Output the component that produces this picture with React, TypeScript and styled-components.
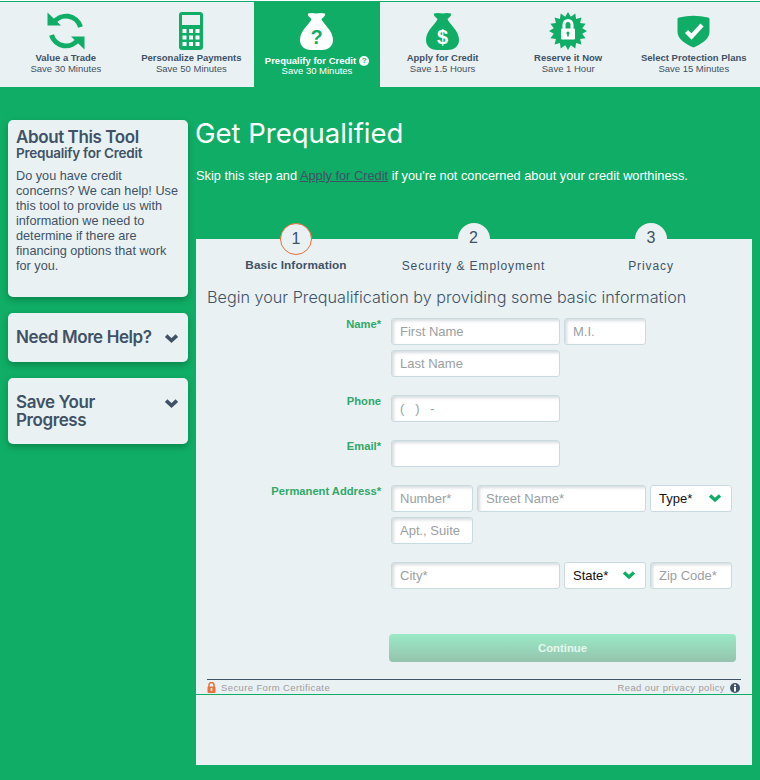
import React from 'react';
import styled, { createGlobalStyle } from 'styled-components';

const GREEN = '#10ad66';
const PALE = '#e9f1f3';
const SLATE = '#3f5266';
const HEAD = '"Inter", "Liberation Sans", sans-serif';

const GlobalStyle = createGlobalStyle`
    html, body {
        margin: 0;
        padding: 0;
        background: ${GREEN};
        font-family: "Liberation Sans", Arial, sans-serif;
    }
    * { box-sizing: border-box; }
`;

const Page = styled.div`
    width: 760px;
    height: 780px;
    overflow: hidden;
    background: ${GREEN};
`;
const TopBar = styled.nav`
    display: flex;
    height: 87px;
    padding: 1px 0 0 3px;
    background: ${PALE};
    border-top: 1px solid #fff;
    box-shadow: inset 0 1px 0 ${GREEN};
`;
const Tab = styled.div<{ $active?: boolean }>`
    flex: 0 0 125.6px;
    display: flex;
    flex-direction: column;
    align-items: center;
    padding-top: 10px;
    font-size: 9.5px;
    line-height: ${p => (p.$active ? '10px' : '11px')};
    text-align: center;
    white-space: nowrap;
    color: ${p => (p.$active ? '#fff' : SLATE)};
    background: ${p => (p.$active ? GREEN : 'transparent')};
`;
const IconBox = styled.div<{ $active?: boolean }>`
    height: 38px;
    display: flex;
    align-items: center;
    margin-bottom: ${p => (p.$active ? '6px' : '2px')};
`;
const TabTitle = styled.div`
    display: flex;
    align-items: center;
    gap: 3px;
    font-weight: 700;
`;
const TabHelp = styled.span`
    width: 10px;
    height: 10px;
    border-radius: 50%;
    background: #fff;
    color: ${GREEN};
    font-size: 8px;
    line-height: 10px;
    font-weight: 700;
`;
const Main = styled.div`
    display: flex;
    gap: 8px;
    padding: 33px 8px 0;
`;
const Side = styled.aside`
    flex: 0 0 180px;
    display: flex;
    flex-direction: column;
    gap: 16px;
`;
const Card = styled.div`
    position: relative;
    padding: 8px 8px 0;
    border-radius: 5px;
    background: ${PALE};
    color: ${SLATE};
    box-shadow: 0 3px 6px rgba(0, 60, 30, 0.35);
`;
const AboutCard = styled(Card)`
    height: 177px;
`;
const HelpCard = styled(Card)`
    height: 49px;
    padding-top: 15px;
`;
const SaveCard = styled(Card)`
    height: 66px;
    padding-top: 15px;
`;
const CardTitle = styled.div`
    font-family: ${HEAD};
    font-size: 17px;
    line-height: 18px;
    font-weight: 600;
    letter-spacing: -0.4px;
    width: 142px;
`;
const CardSub = styled.div`
    font-family: ${HEAD};
    font-size: 13.5px;
    line-height: 15px;
    font-weight: 600;
    letter-spacing: -0.25px;
`;
const CardText = styled.p`
    margin: 8px 0 0;
    width: 164px;
    font-size: 12.7px;
    line-height: 15px;
`;
const CardChevron = styled.div`
    position: absolute;
    right: 9px;
    top: 17px;
`;
const Content = styled.main`
    flex: 0 0 556px;
`;
const PageTitle = styled.h1`
    margin: 0 0 0 -1px;
    height: 31px;
    font-family: ${HEAD};
    font-size: 27.5px;
    line-height: 26px;
    font-weight: 400;
    color: #fff;
`;
const Skip = styled.p`
    margin: 17px 0 0;
    height: 71px;
    font-size: 12.8px;
    line-height: 15px;
    color: #fff;
    white-space: nowrap;
`;
const SkipLink = styled.a`
    color: ${SLATE};
    text-decoration: underline;
`;
const Panel = styled.section`
    height: 526px;
    padding: 0 11px;
    background: ${PALE};
`;
const Steps = styled.div`
    display: flex;
    height: 48px;
`;
const Step = styled.div<{ $width: number }>`
    flex: 0 0 ${p => p.$width}px;
    display: flex;
    flex-direction: column;
    align-items: center;
    margin-top: -16px;
`;
const StepDot = styled.div<{ $active?: boolean }>`
    width: 32px;
    height: 32px;
    border-radius: 50%;
    background: ${PALE};
    border: ${p => (p.$active ? '1px solid #e8703a' : 'none')};
    color: ${SLATE};
    font-size: 16px;
    line-height: 30px;
    text-align: center;
`;
const StepLabel = styled.div<{ $active?: boolean }>`
    margin-top: ${p => (p.$active ? '3px' : '4px')};
    font-size: ${p => (p.$active ? '11.8px' : '12px')};
    line-height: 14px;
    font-weight: ${p => (p.$active ? 700 : 400)};
    letter-spacing: ${p => (p.$active ? '0.1px' : '0.9px')};
    color: ${SLATE};
    white-space: nowrap;
`;
const Lead = styled.h2`
    margin: 0 0 9px;
    height: 22px;
    font-family: ${HEAD};
    font-size: 16.2px;
    line-height: 20px;
    font-weight: 300;
    color: ${SLATE};
    white-space: nowrap;
`;
const FormRow = styled.div<{ $gap: number }>`
    display: grid;
    grid-template-columns: 174px 345px;
    column-gap: 10px;
    margin-bottom: ${p => p.$gap}px;
`;
const Label = styled.label`
    text-align: right;
    font-size: 11.2px;
    line-height: 12px;
    font-weight: 700;
    color: #2fa869;
`;
const Fields = styled.div`
    display: flex;
    flex-wrap: wrap;
    gap: 5px 4px;
`;
const Input = styled.input<{ $w: number }>`
    width: ${p => p.$w}px;
    height: 27px;
    padding: 0 8px;
    border: 1px solid #c9dbe0;
    border-radius: 3px;
    background: #fff;
    box-shadow: inset 2px 2px 3px rgba(120, 140, 150, 0.3);
    font-family: "Liberation Sans", Arial, sans-serif;
    font-size: 13px;
    color: #222;
    outline: none;
    &::placeholder { color: #9a9fa3; opacity: 1; }
`;
const Picker = styled.div`
    width: 82px;
    height: 27px;
    display: flex;
    align-items: center;
    justify-content: space-between;
    padding: 0 9px 0 8px;
    border: 1px solid #c9dbe0;
    border-radius: 3px;
    background: #fff;
    font-size: 13px;
    color: #111;
`;
const AddressGap = styled.div`
    flex: 0 0 100%;
    height: 8px;
`;
const Continue = styled.button`
    display: block;
    width: 347px;
    height: 28px;
    margin: 45px 0 0 182px;
    border: none;
    border-radius: 4px;
    background: linear-gradient(#9aeac6, #95c3ae);
    color: #e6f7ef;
    font-family: "Liberation Sans", Arial, sans-serif;
    font-size: 11.3px;
    font-weight: 700;
`;
const Secure = styled.div`
    display: flex;
    justify-content: space-between;
    align-items: center;
    height: 15px;
    margin-top: 17px;
    padding: 1px 1px 0 0;
    border-top: 1px solid ${SLATE};
    font-size: 9.5px;
    line-height: 14px;
    letter-spacing: 0.38px;
    color: #a09ca0;
`;
const SecureSide = styled.div`
    display: flex;
    align-items: center;
    gap: 5px;
`;
const GreenRule = styled.div`
    height: 1px;
    margin: 0 -11px;
    background: ${GREEN};
`;

const Chevron = ({ color, size = 15 }: { color: string; size?: number }) => (
    <svg width={size} height={size * 0.72} viewBox="0 0 14 10">
        <path d="M2 2.5 L7 7 L12 2.5" fill="none" stroke={color} strokeWidth="3.4" />
    </svg>
);

const RefreshIcon = ({ c }: { c: string }) => {
    const half = (
        <>
            <path d="M6.5 11 A15 15 0 0 1 33.5 15" fill="none" stroke={c} strokeWidth="5" />
            <path d="M0.5 0.5 L0.5 13.5 L14 13.5 Z" fill={c} />
        </>
    );
    return (
        <svg width="38" height="38" viewBox="0 0 38 38">
            {half}
            <g transform="rotate(180 19 19)">{half}</g>
        </svg>
    );
};

const CalculatorIcon = ({ c }: { c: string }) => {
    const rows = [17, 23.5, 30];
    return (
        <svg width="24" height="38" viewBox="0 0 24 38">
            <rect x="0" y="0" width="24" height="38" rx="3" fill={c} />
            <rect x="3" y="3" width="18" height="10" fill={PALE} />
            {rows.map(y =>
                [3.5, 10, 16.5].map(x => <rect key={`${y}-${x}`} x={x} y={y} width="4" height="4" fill="#fff" />),
            )}
        </svg>
    );
};

const BagIcon = ({ bag, mark, glyph }: { bag: string; mark: string; glyph: string }) => (
    <svg width="33" height="38" viewBox="0 0 33 38">
        <path d="M8 1.5 Q12 0.5 16.5 1.5 Q21 0.5 25 1.5 Q26 3.5 21.5 7 C23 12 33 18 33 28 C33 35 27 38 22 38 L11 38 C6 38 0 35 0 28 C0 18 10 12 11.5 7 Q7 3.5 8 1.5 Z" fill={bag} />
        <text x="16.5" y="32" textAnchor="middle" fontFamily="Liberation Sans" fontWeight="700" fontSize="20" fill={mark}>
            {glyph}
        </text>
    </svg>
);

const burst = Array.from({ length: 32 }, (_, i) => {
    const r = i % 2 === 0 ? 19 : 14.5;
    const a = (i / 32) * Math.PI * 2;
    return `${(19 + r * Math.sin(a)).toFixed(1)},${(19 - r * Math.cos(a)).toFixed(1)}`;
}).join(' ');

const LockBadgeIcon = ({ c }: { c: string }) => (
    <svg width="38" height="38" viewBox="0 0 38 38">
        <polygon points={burst} fill={c} />
        <path d="M15 17 V12.5 a4 4 0 0 1 8 0 V17" fill="none" stroke="#fff" strokeWidth="3" />
        <rect x="12" y="16.5" width="14" height="11" rx="1" fill="#fff" />
        <circle cx="19" cy="21" r="1.6" fill={c} />
        <rect x="18.2" y="21" width="1.6" height="3.5" fill={c} />
    </svg>
);

const ShieldIcon = ({ c }: { c: string }) => (
    <svg width="33" height="33" viewBox="0 0 33 33">
        <path d="M0.5 4 Q0.5 2.5 2 2.5 Q16.5 -1 31 2.5 Q32.5 2.5 32.5 4 L32.5 17 C32.5 24 24 29.5 16.5 32.5 C9 29.5 0.5 24 0.5 17 Z" fill={c} />
        <path d="M9.5 16.5 L14.5 21.5 L25 10" fill="none" stroke="#fff" strokeWidth="4.4" />
    </svg>
);

const tabs = [
    { title: 'Value a Trade', save: 'Save 30 Minutes', icon: <RefreshIcon c={GREEN} /> },
    { title: 'Personalize Payments', save: 'Save 50 Minutes', icon: <CalculatorIcon c={GREEN} /> },
    { title: 'Prequalify for Credit', save: 'Save 30 Minutes', active: true, icon: <BagIcon bag="#fff" mark={GREEN} glyph="?" /> },
    { title: 'Apply for Credit', save: 'Save 1.5 Hours', icon: <BagIcon bag={GREEN} mark="#fff" glyph="$" /> },
    { title: 'Reserve it Now', save: 'Save 1 Hour', icon: <LockBadgeIcon c={GREEN} /> },
    { title: 'Select Protection Plans', save: 'Save 15 Minutes', icon: <ShieldIcon c={GREEN} /> },
];

const App = () => {
    return (
        <Page>
            <GlobalStyle />
            <TopBar>
                {tabs.map(tab => (
                    <Tab key={tab.title} $active={tab.active}>
                        <IconBox $active={tab.active}>{tab.icon}</IconBox>
                        <TabTitle>
                            {tab.title}
                            {tab.active && <TabHelp>?</TabHelp>}
                        </TabTitle>
                        <div>{tab.save}</div>
                    </Tab>
                ))}
            </TopBar>
            <Main>
                <Side>
                    <AboutCard>
                        <CardTitle>About This Tool</CardTitle>
                        <CardSub>Prequalify for Credit</CardSub>
                        <CardText>
                            Do you have credit concerns? We can help! Use this tool to provide us with information we need to
                            determine if there are financing options that work for you.
                        </CardText>
                    </AboutCard>
                    <HelpCard>
                        <CardTitle>Need More Help?</CardTitle>
                        <CardChevron><Chevron color={SLATE} /></CardChevron>
                    </HelpCard>
                    <SaveCard>
                        <CardTitle>Save Your Progress</CardTitle>
                        <CardChevron><Chevron color={SLATE} /></CardChevron>
                    </SaveCard>
                </Side>
                <Content>
                    <PageTitle>Get Prequalified</PageTitle>
                    <Skip>
                        Skip this step and <SkipLink>Apply for Credit</SkipLink> if you're not concerned about your credit
                        worthiness.
                    </Skip>
                    <Panel>
                        <Steps>
                            <Step $width={178}>
                                <StepDot $active>1</StepDot>
                                <StepLabel $active>Basic Information</StepLabel>
                            </Step>
                            <Step $width={177}>
                                <StepDot>2</StepDot>
                                <StepLabel>Security &amp; Employment</StepLabel>
                            </Step>
                            <Step $width={178}>
                                <StepDot>3</StepDot>
                                <StepLabel>Privacy</StepLabel>
                            </Step>
                        </Steps>
                        <Lead>Begin your Prequalification by providing some basic information</Lead>
                        <FormRow $gap={18}>
                            <Label>Name*</Label>
                            <Fields>
                                <Input $w={169} placeholder="First Name" />
                                <Input $w={82} placeholder="M.I." />
                                <Input $w={169} placeholder="Last Name" />
                            </Fields>
                        </FormRow>
                        <FormRow $gap={18}>
                            <Label>Phone</Label>
                            <Fields>
                                <Input $w={169} placeholder="(   )   -" />
                            </Fields>
                        </FormRow>
                        <FormRow $gap={18}>
                            <Label>Email*</Label>
                            <Fields>
                                <Input $w={169} />
                            </Fields>
                        </FormRow>
                        <FormRow $gap={0}>
                            <Label>Permanent Address*</Label>
                            <Fields>
                                <Input $w={82} placeholder="Number*" />
                                <Input $w={169} placeholder="Street Name*" />
                                <Picker>
                                    Type*
                                    <Chevron color={GREEN} size={14} />
                                </Picker>
                                <Input $w={82} placeholder="Apt., Suite" />
                                <AddressGap />
                                <Input $w={169} placeholder="City*" />
                                <Picker>
                                    State*
                                    <Chevron color={GREEN} size={14} />
                                </Picker>
                                <Input $w={82} placeholder="Zip Code*" />
                            </Fields>
                        </FormRow>
                        <Continue>Continue</Continue>
                        <Secure>
                            <SecureSide>
                                <svg width="9" height="11" viewBox="0 0 9 11">
                                    <path d="M2 5 V3 a2.5 2.5 0 0 1 5 0 V5" fill="none" stroke="#e8703a" strokeWidth="1.5" />
                                    <rect x="0.5" y="4.5" width="8" height="6.5" rx="1" fill="#e8703a" />
                                    <rect x="3.5" y="6" width="2" height="3" fill="#fbd8c6" />
                                </svg>
                                Secure Form Certificate
                            </SecureSide>
                            <SecureSide>
                                Read our privacy policy
                                <svg width="10" height="10" viewBox="0 0 10 10">
                                    <circle cx="5" cy="5" r="5" fill={SLATE} />
                                    <rect x="4" y="1.5" width="2" height="1.7" fill="#fff" />
                                    <rect x="4" y="4" width="2" height="4.5" fill="#fff" />
                                </svg>
                            </SecureSide>
                        </Secure>
                        <GreenRule />
                    </Panel>
                </Content>
            </Main>
        </Page>
    );
};

export default App;
